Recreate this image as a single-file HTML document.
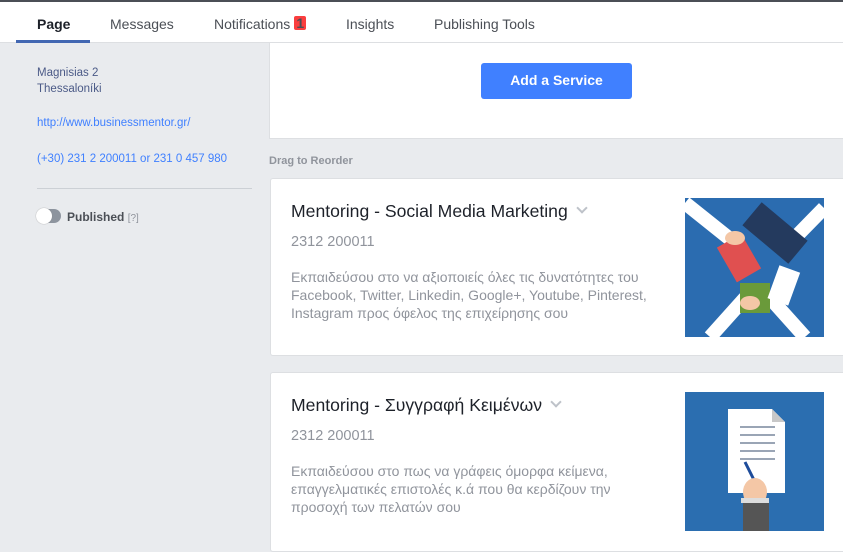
<!DOCTYPE html><html><head><meta charset="utf-8"><style>
*{margin:0;padding:0;box-sizing:border-box}
body{width:843px;height:541px;overflow:hidden;background:#e9ebee;font-family:"Liberation Sans",sans-serif;position:relative}
.top{position:absolute;left:0;top:0;width:843px;height:2px;background:#4b4f56}
.nav{position:absolute;left:0;top:2px;width:843px;height:41px;background:#fff;border-bottom:1px solid #dddfe2}
.nav span{position:absolute;top:14px;font-size:14px;color:#4b4f56}
.ul{position:absolute;left:16px;top:40px;width:74px;height:3px;background:#4267b2}
.badge{display:inline-block;background:#fa3e3e;color:#fff;font-size:10px;font-weight:bold;width:12px;height:14px;text-align:center;line-height:14px;border-radius:2px;vertical-align:1px;margin-left:4px}
.side{position:absolute;left:37px;font-size:11.5px}
.panel{position:absolute;left:269px;top:43px;width:574px;height:96px;background:#fff;border:1px solid #dddfe2;border-top:none;border-right:none}
.btn{position:absolute;left:481px;top:63px;width:151px;height:36px;background:#4080ff;border-radius:3px;color:#fff;font-weight:bold;font-size:14px;text-align:center;line-height:35px}
.card{position:absolute;left:270px;width:573px;background:#fff;border:1px solid #dddfe2;border-right:none;border-radius:3px 0 0 3px}
.t{position:absolute;left:20px;font-size:17.6px;color:#1d2129;white-space:nowrap}
.t i{display:inline-block;width:8px;height:8px;border-right:2px solid #bec2c9;border-bottom:2px solid #bec2c9;transform:rotate(45deg);margin-left:10px;vertical-align:5px}
.ph{position:absolute;left:20px;font-size:14.5px;color:#90949c}
.d{position:absolute;left:20px;font-size:14px;color:#90949c;line-height:18px;width:372px}
</style></head><body>
<div class="top"></div>
<div class="nav">
<span style="left:37px;font-weight:bold;color:#1d2129">Page</span>
<span style="left:110px">Messages</span>
<span style="left:214px">Notifications<span class="badge" style="position:static">1</span></span>
<span style="left:346px">Insights</span>
<span style="left:434px">Publishing Tools</span>
</div>
<div class="ul"></div>
<div class="side" style="top:65px;color:#4b5a87;line-height:16px">Magnisias 2<br>Thessaloníki</div>
<div class="side" style="top:117px;color:#4080ff">http://www.businessmentor.gr/</div>
<div class="side" style="top:153px;color:#4080ff">(+30) 231 2 200011 or 231 0 457 980</div>
<div style="position:absolute;left:37px;top:188px;width:215px;height:1px;background:#ccd0d5"></div>
<div style="position:absolute;left:37px;top:209px;width:24px;height:14px;border-radius:7px;background:#8d949e"></div>
<div style="position:absolute;left:36px;top:208px;width:16px;height:16px;border-radius:8px;background:#fff;box-shadow:0 0 1px #888"></div>
<div style="position:absolute;left:67px;top:210px;font-size:12px;font-weight:bold;color:#4b4f56">Published <span style="font-weight:normal;color:#90949c;font-size:10px">[?]</span></div>
<div class="panel"></div>
<div class="btn">Add a Service</div>
<div style="position:absolute;left:269px;top:155px;font-size:11px;font-weight:bold;color:#90949c">Drag to Reorder</div>
<div class="card" style="top:178px;height:178px">
<div class="t" style="top:22px">Mentoring - Social Media Marketing<i></i></div>
<div class="ph" style="top:55px">2312 200011</div>
<div class="d" style="top:89px">Εκπαιδεύσου στο να αξιοποιείς όλες τις δυνατότητες του Facebook, Twitter, Linkedin, Google+, Youtube, Pinterest, Instagram προς όφελος της επιχείρησης σου</div>
<svg style="position:absolute;left:414px;top:19px" width="139" height="139"><rect width="139" height="139" fill="#2b6cb0"/><path d="M0 5L50 45M139 10L95 55M25 139L60 100M120 139L85 100" stroke="#fff" stroke-width="14"/><rect x="40" y="40" width="28" height="40" fill="#e05050" transform="rotate(-30 54 60)"/><rect x="60" y="20" width="60" height="30" fill="#243a5e" transform="rotate(40 90 35)"/><rect x="55" y="85" width="30" height="30" fill="#6a9a3a"/><rect x="88" y="70" width="22" height="35" fill="#fff" transform="rotate(20 99 87)"/><ellipse cx="50" cy="40" rx="10" ry="7" fill="#f4c7a6"/><ellipse cx="65" cy="105" rx="10" ry="7" fill="#f4c7a6"/></svg>
</div>
<div class="card" style="top:372px;height:180px">
<div class="t" style="top:22px">Mentoring - Συγγραφή Κειμένων<i></i></div>
<div class="ph" style="top:55px">2312 200011</div>
<div class="d" style="top:89px">Εκπαιδεύσου στο πως να γράφεις όμορφα κείμενα, επαγγελματικές επιστολές κ.ά που θα κερδίζουν την προσοχή των πελατών σου</div>
<svg style="position:absolute;left:414px;top:19px" width="139" height="139"><rect width="139" height="139" fill="#2b6eb0"/><path d="M43 17H87L100 30V101H43Z" fill="#fff"/><path d="M87 17V30H100Z" fill="#c8c8c8"/><path d="M55 35H90M55 43H90M55 51H90M55 59H90M55 67H90" stroke="#9aa5b5" stroke-width="2"/><path d="M60 70L75 100" stroke="#1e4c9a" stroke-width="3"/><ellipse cx="70" cy="100" rx="12" ry="14" fill="#f4c7a6"/><rect x="58" y="110" width="26" height="29" fill="#555"/><rect x="56" y="106" width="28" height="5" fill="#ddd"/></svg>
</div>
</body></html>
